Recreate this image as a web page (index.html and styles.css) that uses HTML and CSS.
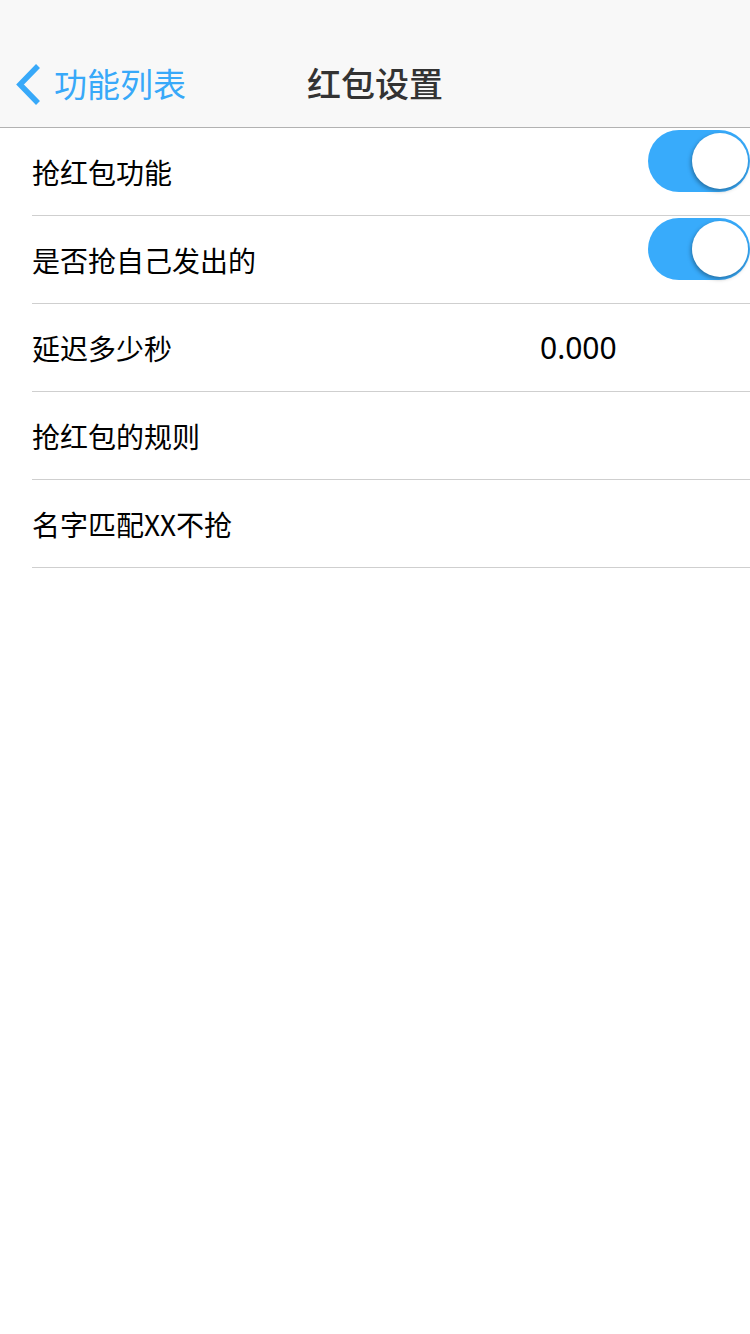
FILE: index.html
```html
<!DOCTYPE html>
<html lang="zh-CN">
<head>
  <meta charset="UTF-8" />
  <title>红包设置</title>
  <link rel="stylesheet" href="styles.css">
</head>
<body>
  <div class="navbar">
    <div class="nav-inner">
      <div class="back">
        <svg class="chevron" width="30" height="44" viewBox="0 0 30 44">
          <polyline points="24,3 6,21.5 24,40" fill="none" stroke="#38a9f9" stroke-width="5.5" stroke-linecap="butt" stroke-linejoin="miter" />
        </svg>
        <span>功能列表</span>
      </div>
      <div class="title">红包设置</div>
    </div>
  </div>

  <ul class="list">
    <li class="row">
      <span class="label">抢红包功能</span>
      <span class="switch on"><span class="knob"></span></span>
    </li>
    <li class="row">
      <span class="label">是否抢自己发出的</span>
      <span class="switch on"><span class="knob"></span></span>
    </li>
    <li class="row">
      <span class="label">延迟多少秒</span>
      <span class="value">0.000</span>
    </li>
    <li class="row">
      <span class="label">抢红包的规则</span>
    </li>
    <li class="row">
      <span class="label">名字匹配XX不抢</span>
    </li>
  </ul>
</body>
</html>
```

FILE: styles.css
```css
body { margin: 0; background: #fff; font-family: "Noto Sans CJK SC", "Noto Sans", sans-serif; color: #000; width: 750px; overflow: hidden; }
.navbar { background: #f8f8f8; height: 128px; border-bottom: 1px solid #b2b2b2; padding-top: 40px; box-sizing: border-box; }
.nav-inner { position: relative; height: 87px; display: flex; align-items: center; }
.back { display: flex; align-items: center; padding-left: 14px; color: #38a9f9; font-size: 33px; }
.chevron { display: block; margin-right: 10px; margin-top: 2px; }
.back span { line-height: 1; margin-top: -1px; }
.title { position: absolute; left: 0; right: 0; text-align: center; font-size: 34px; font-weight: 500; color: #333; line-height: 87px; top: -1px; }
.list { list-style: none; margin: 0; padding: 0 0 0 32px; }
.row { height: 87px; border-bottom: 1px solid #cfcfcf; display: flex; align-items: center; position: relative; }
.label { font-size: 28px; line-height: 1; margin-top: 0; }
.value { position: absolute; left: 508px; font-size: 30px; font-family: "Noto Sans", sans-serif; top: 29px; line-height: 1; }
.switch { position: absolute; right: 0; top: 2px; width: 102px; height: 62px; border-radius: 31px; background: #38abfb; }
.knob { position: absolute; right: 2px; top: 3px; width: 56px; height: 56px; border-radius: 50%; background: #fff; box-shadow: -1px 2px 4px rgba(0,0,0,0.35); }
```
